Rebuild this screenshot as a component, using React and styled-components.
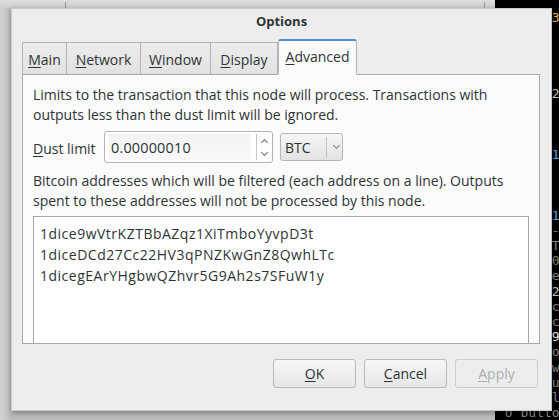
import styled, { createGlobalStyle } from "styled-components";

const GlobalStyle = createGlobalStyle`
  html, body {
    margin: 0;
    padding: 0;
    width: 559px;
    height: 420px;
    overflow: hidden;
    background: #d3d3d3;
  }
`;

// terminal behind the dialog, only the right edge shows
const terminalLines = [
  { text: "       35", color: "#e0c060" },
  { text: "", color: "#aaa" },
  { text: "", color: "#aaa" },
  { text: "", color: "#aaa" },
  { text: "", color: "#aaa" },
  { text: "       2", color: "#c8c8c8" },
  { text: "", color: "#aaa" },
  { text: "", color: "#aaa" },
  { text: "", color: "#aaa" },
  { text: "       1", color: "#5a9fe8" },
  { text: "", color: "#aaa" },
  { text: "", color: "#aaa" },
  { text: "", color: "#aaa" },
  { text: "       1", color: "#5a9fe8" },
  { text: "       -", color: "#888" },
  { text: "       TH", color: "#888" },
  { text: "       0(", color: "#888" },
  { text: "       er", color: "#888" },
  { text: "       2", color: "#c8c8c8" },
  { text: "       ca", color: "#888" },
  { text: "       ca", color: "#888" },
  { text: "       9", color: "#e8e8e8" },
  { text: "       or", color: "#888" },
  { text: "       wa", color: "#888" },
  { text: "       ui", color: "#888" },
  { text: "       lt", color: "#888" },
  { text: " o butto/", color: "#888" },
];

const tabs = [
  { key: "M", rest: "ain", width: 45 },
  { key: "N", rest: "etwork", width: 74 },
  { key: "W", rest: "indow", width: 70 },
  { key: "D", rest: "isplay", width: 67 },
  { key: "A", rest: "dvanced", width: 79, active: true },
];

const App = () => {
  return (
    <>
      <GlobalStyle />
      <Desktop>
        <TopStrip>
          <Tick style={{ left: 65 }} />
          <Tick style={{ left: 484 }} />
        </TopStrip>
        <Terminal>
          {terminalLines.map((l, i) => (
            <TermLine key={i} $color={l.color}>
              {l.text || "\u00a0"}
            </TermLine>
          ))}
        </Terminal>
        <Dialog>
          <TitleBar>Options</TitleBar>
          <Body>
            <Tabs>
              {tabs.map((t) => (
                <Tab key={t.key + t.rest} $active={t.active} $width={t.width}>
                  <U>{t.key}</U>
                  {t.rest}
                </Tab>
              ))}
            </Tabs>
            <Pane>
              <Para>
                {`Limits to the transaction that this node will process. Transactions with
outputs less than the dust limit will be ignored.`}
              </Para>
              <DustRow>
                <Label><U>D</U>ust limit</Label>
                <SpinBox>
                  <SpinField>0.00000010</SpinField>
                  <SpinButtons>
                    <SpinArrow viewBox="0 0 10 6">
                      <path d="M1.5 5 L5 1.5 L8.5 5" />
                    </SpinArrow>
                    <SpinArrow viewBox="0 0 10 6">
                      <path d="M1.5 1 L5 4.5 L8.5 1" />
                    </SpinArrow>
                  </SpinButtons>
                </SpinBox>
                <Combo>
                  <ComboText>BTC</ComboText>
                  <ComboSep />
                  <ComboArrow viewBox="0 0 10 6">
                    <path d="M1.5 1 L5 4.5 L8.5 1" />
                  </ComboArrow>
                </Combo>
              </DustRow>
              <Para $top={8}>
                {`Bitcoin addresses which will be filtered (each address on a line). Outputs
spent to these addresses will not be processed by this node.`}
              </Para>
              <AddressBox>
                <div>1dice9wVtrKZTBbAZqz1XiTmboYyvpD3t</div>
                <div>1diceDCd27Cc22HV3qPNZKwGnZ8QwhLTc</div>
                <div>1dicegEArYHgbwQZhvr5G9Ah2s7SFuW1y</div>
              </AddressBox>
            </Pane>
            <ButtonRow>
              <Button><U>O</U>K</Button>
              <Button><U>C</U>ancel</Button>
              <Button disabled><U>A</U>pply</Button>
            </ButtonRow>
          </Body>
        </Dialog>
      </Desktop>
    </>
  );
};

const Desktop = styled.div`
  position: relative;
  width: 559px;
  height: 420px;
  overflow: hidden;
  background: linear-gradient(to right, #d2d2d2 0px, #c6c6c6 8px, #bdbdbd 11px);
  font-family: "Open Sans", "Noto Sans", sans-serif;
  color: #2e3436;
`;

const TopStrip = styled.div`
  position: absolute;
  left: 0;
  top: 0;
  width: 495px;
  height: 8px;
  background: linear-gradient(#dedede, #cfcfcf);
`;

const Tick = styled.span`
  position: absolute;
  top: 2px;
  width: 1px;
  height: 6px;
  background: #9a9a9a;
`;

const Terminal = styled.div`
  position: absolute;
  left: 495px;
  top: 0;
  width: 64px;
  height: 420px;
  background: #000;
  padding: 10px 0 0 2px;
  box-sizing: border-box;
  font-family: "DejaVu Sans Mono", monospace;
  font-size: 13px;
  line-height: 15.2px;
  white-space: pre;
  overflow: hidden;
`;

const TermLine = styled.div`
  color: ${(p) => p.$color};
`;

const Dialog = styled.div`
  position: absolute;
  left: 11px;
  top: 8px;
  width: 541px;
  height: 403px;
  box-sizing: border-box;
  background: #ededed;
  border: 1px solid #c9c9c9;
  box-shadow: 0 2px 6px rgba(0, 0, 0, 0.35);
  display: flex;
  flex-direction: column;
`;

const TitleBar = styled.div`
  height: 23px;
  display: flex;
  align-items: center;
  justify-content: center;
  font-weight: 700;
  font-size: 13px;
  color: #2e3436;
`;

const Body = styled.div`
  flex: 1;
  display: flex;
  flex-direction: column;
  padding: 8px 11px 0 10px;
`;

const Tabs = styled.div`
  display: flex;
  align-items: flex-end;
  height: 35px;
  margin-bottom: -1px;
  position: relative;
  z-index: 1;
`;

const Tab = styled.div`
  box-sizing: border-box;
  width: ${(p) => p.$width}px;
  height: ${(p) => (p.$active ? "36px" : "33px")};
  padding-top: ${(p) => (p.$active ? "0" : "2px")};
  padding-bottom: ${(p) => (p.$active ? "2px" : "0")};
  display: flex;
  align-items: center;
  justify-content: center;
  font-size: 14px;
  color: #2e3436;
  border: 1px solid #b4b4b4;
  border-left: ${(p) => (p.$active ? "1px solid #b4b4b4" : "none")};
  border-bottom: ${(p) => (p.$active ? "1px solid #fbfbfb" : "1px solid #a8a8a8")};
  border-top: ${(p) => (p.$active ? "2px solid #4a90d9" : "1px solid #b4b4b4")};
  border-radius: ${(p) => (p.$active ? "3px 3px 0 0" : "0")};
  background: ${(p) => (p.$active ? "#fbfbfb" : "linear-gradient(#ececec, #e2e2e2)")};

  &:first-child {
    border-left: 1px solid #b4b4b4;
  }
`;

const U = styled.span`
  text-decoration: underline;
  text-underline-offset: 2px;
`;

const Pane = styled.div`
  height: 270px;
  box-sizing: border-box;
  border: 1px solid #a8a8a8;
  background: #fbfbfb;
  padding: 10px 10px 0;
  overflow: hidden;
  display: flex;
  flex-direction: column;
`;

const Para = styled.div`
  font-size: 14px;
  line-height: 20px;
  margin-top: ${(p) => p.$top || 0}px;
  white-space: pre-line;
`;

const DustRow = styled.div`
  display: flex;
  align-items: center;
  margin-top: 6px;
  height: 32px;
`;

const Label = styled.div`
  font-size: 14px;
  width: 71px;
  padding-top: 2px;
`;

const SpinBox = styled.div`
  box-sizing: border-box;
  width: 169px;
  height: 32px;
  display: flex;
  border: 1px solid #b2b2b2;
  border-radius: 3px;
  background: #fff;
  padding: 2px 0 2px 3px;
`;

const SpinField = styled.div`
  flex: 1;
  display: flex;
  align-items: center;
  padding-left: 3px;
  font-size: 14.4px;
  letter-spacing: 0.2px;
  background: linear-gradient(#f3f3f3, #f8f8f8);
  border-radius: 2px;
  color: #2e3436;
`;

const SpinButtons = styled.div`
  width: 15px;
  margin-left: 5px;
  border-left: 1px solid #c6c6c6;
  display: flex;
  flex-direction: column;
  align-items: center;
  justify-content: space-around;
`;

const SpinArrow = styled.svg`
  width: 9px;
  height: 6px;
  fill: none;
  stroke: #7a7a7a;
  stroke-width: 1.3;
`;

const Combo = styled.div`
  box-sizing: border-box;
  margin-left: 7px;
  width: 63px;
  height: 28px;
  display: flex;
  align-items: center;
  border: 1px solid #b6b6b6;
  border-radius: 3px;
  background: linear-gradient(#f6f6f6, #e3e3e3);
`;

const ComboText = styled.div`
  font-size: 14px;
  padding-left: 4px;
  width: 41px;
`;

const ComboSep = styled.div`
  width: 1px;
  height: 20px;
  background: #c2c2c2;
`;

const ComboArrow = styled.svg`
  width: 9px;
  height: 6px;
  margin-left: 5px;
  fill: none;
  stroke: #8a8a8a;
  stroke-width: 1.3;
`;

const AddressBox = styled.div`
  margin-top: 5px;
  flex: none;
  height: 150px;
  border: 1px solid #a6a6a6;
  background: #fff;
  padding: 6px 6px;
  font-size: 14px;
  letter-spacing: 0.5px;
  line-height: 21px;
  color: #2e3436;
`;

const ButtonRow = styled.div`
  display: flex;
  justify-content: flex-end;
  gap: 8px;
  margin-top: 15px;
  padding-right: 2px;
`;

const Button = styled.button`
  width: 83px;
  height: 29px;
  border: 1px solid #b9b9b9;
  border-radius: 3px;
  background: ${(p) => (p.disabled ? "#ededed" : "linear-gradient(#f7f7f7, #e6e6e6)")};
  border-color: ${(p) => (p.disabled ? "#cdcdcd" : "#b9b9b9")};
  font-family: "Open Sans", "Noto Sans", sans-serif;
  font-size: 14px;
  color: ${(p) => (p.disabled ? "#a9adad" : "#2e3436")};
  padding: 0;
`;

export default App;
